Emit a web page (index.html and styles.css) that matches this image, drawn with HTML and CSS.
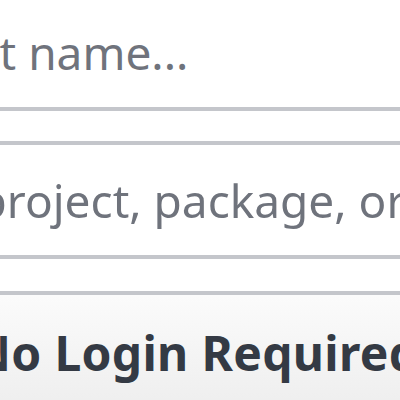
FILE: index.html
```html
<!DOCTYPE html>
<html lang="en">
<head>
  <meta charset="UTF-8" />
  <meta name="viewport" content="width=device-width, initial-scale=1.0" />
  <title>New Project</title>
  <link rel="stylesheet" href="styles.css">
</head>
<body>
  <div class="form">
    <input class="field field-name" type="text" placeholder="Enter project name...">
    <input class="field field-search" type="text" placeholder="Search project, package, or keyword...">
    <button class="login">No Login Required</button>
  </div>
</body>
</html>
```

FILE: styles.css
```css
* {
  box-sizing: border-box;
}

body {
  margin: 0;
  width: 400px;
  height: 400px;
  overflow: hidden;
  background-color: #ffffff;
  font-family: 'Noto Sans', 'Open Sans', sans-serif;
}

.form {
  display: flex;
  flex-direction: column;
  margin: -7px -40px 0 -40px;
  width: 480px;
  filter: blur(0.6px);
}

.field {
  height: 118px;
  width: 100%;
  border: 4px solid #c4c6cb;
  background-color: #ffffff;
  font-family: inherit;
  font-size: 46px;
  color: #3a3f47;
  outline: none;
  padding: 0;
}

.field::placeholder {
  color: #6f737c;
}

.field-name {
  margin-bottom: 30px;
  text-indent: -226px;
}

.field-search {
  margin-bottom: 32px;
  text-indent: -143px;
}

.login {
  height: 118px;
  width: 100%;
  border: 4px solid #c4c6cb;
  border-bottom: none;
  background: linear-gradient(#fbfbfb, #eeeeee);
  font-family: inherit;
  font-size: 48px;
  font-weight: 700;
  letter-spacing: 0.3px;
  color: #343a44;
  padding: 0;
  text-align: left;
  text-indent: 8px;
}
```
